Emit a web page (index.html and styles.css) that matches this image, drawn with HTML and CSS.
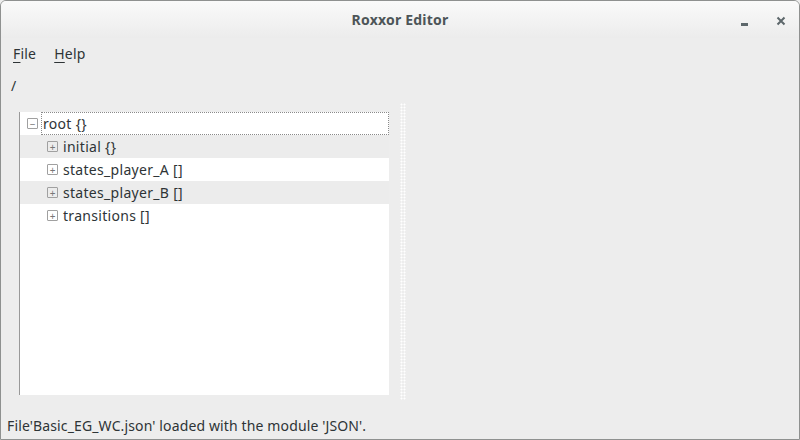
FILE: index.html
```html
<!DOCTYPE html>
<html>
<head>
<meta charset="utf-8">
<link rel="stylesheet" href="styles.css">
</head>
<body>
<div class="window">
  <div class="titlebar">
    <div class="title">Roxxor Editor</div>
    <div class="controls">
      <span class="min"></span>
      <svg class="close" width="10" height="10" viewBox="0 0 10 10"><path d="M1.5 1.5 L8.5 8.5 M8.5 1.5 L1.5 8.5" stroke="#5d676b" stroke-width="2"/></svg>
    </div>
  </div>
  <div class="menubar">
    <span class="menu"><u>F</u>ile</span>
    <span class="menu"><u>H</u>elp</span>
  </div>
  <div class="path">/</div>
  <div class="content">
    <div class="treewrap">
      <div class="tree">
        <div class="row root focus"><span class="exp">−</span><span class="lbl">root {}</span></div>
        <div class="row child alt"><span class="exp">+</span><span class="lbl">initial {}</span></div>
        <div class="row child"><span class="exp">+</span><span class="lbl">states_player_A []</span></div>
        <div class="row child alt"><span class="exp">+</span><span class="lbl">states_player_B []</span></div>
        <div class="row child"><span class="exp">+</span><span class="lbl">transitions []</span></div>
      </div>
    </div>
    <div class="handle"></div>
    <div class="rightpane"></div>
  </div>
  <div class="status">File'Basic_EG_WC.json' loaded with the module 'JSON'.</div>
</div>
</body>
</html>
```
FILE: styles.css
```css
html, body { margin: 0; padding: 0; }
body {
  width: 800px; height: 440px; overflow: hidden;
  font-family: "Noto Sans", "DejaVu Sans", sans-serif;
  font-size: 13px;
  color: #2e3436;
  background: #ededed;
}
.window {
  box-sizing: border-box;
  width: 800px; height: 440px;
  border: 1px solid #8f9190;
  border-top-left-radius: 6px;
  border-top-right-radius: 6px;
  background: #ededed;
  display: flex; flex-direction: column;
  overflow: hidden;
}
.titlebar {
  height: 37px; flex: none;
  background: linear-gradient(#fafafa, #ececec);
  display: flex; align-items: center; justify-content: center;
  position: relative;
}
.title { font-weight: bold; color: #4d5558; font-size: 14px; margin-top: -1px; letter-spacing: 0.2px; }
.controls {
  position: absolute; right: 13px; top: 14px;
  display: flex; align-items: center; gap: 28px;
}
.min { width: 7px; height: 3px; background: #5d676b; margin-top: 8px; }
.close { display: block; }
.menubar {
  height: 30px; flex: none;
  display: flex; align-items: center; gap: 18px;
  padding-left: 12px;
  font-size: 14px;
  letter-spacing: 0.2px;
}
.menu u { text-decoration-thickness: 1px; text-underline-offset: 3px; }
.path { height: 36px; flex: none; padding-left: 10px; font-size: 14px; line-height: 36px; }
.content { flex: 1; display: flex; min-height: 0; padding-top: 8px; }
.treewrap { width: 369px; margin-left: 18px; height: 283px; background: #fff; border-left: 1px solid #999; }
.tree { display: flex; flex-direction: column; }
.row { height: 23px; display: flex; align-items: center; font-size: 14px; color: #2e3436; box-sizing: border-box; letter-spacing: 0.3px; }
.row.alt { background: #ececec; }
.root { padding-left: 7px; }
.child { padding-left: 27px; }
.focus .lbl { align-self: stretch; flex: 1; display: flex; align-items: center; border: 1px dotted #8a8a8a; padding-left: 1px; margin-left: 3px; }
.exp {
  width: 9px; height: 9px; border: 1px solid #a0a0a0; border-radius: 1px;
  display: flex; align-items: center; justify-content: center;
  font-size: 10px; line-height: 1; color: #777; flex: none; box-sizing: content-box; letter-spacing: 0;
}
.child .lbl { margin-left: 5px; }
.handle {
  width: 6px; margin-left: 11px; margin-top: -9px; height: 297px;
  background-image: radial-gradient(circle, #ffffff 0.9px, transparent 1.1px);
  background-size: 3px 3px;
}
.rightpane { flex: 1; }
.status { height: 29px; flex: none; padding-left: 6px; font-size: 14px; line-height: 26px; padding-top: 3px; box-sizing: border-box; color: #2e3436; letter-spacing: 0.13px; }
```
